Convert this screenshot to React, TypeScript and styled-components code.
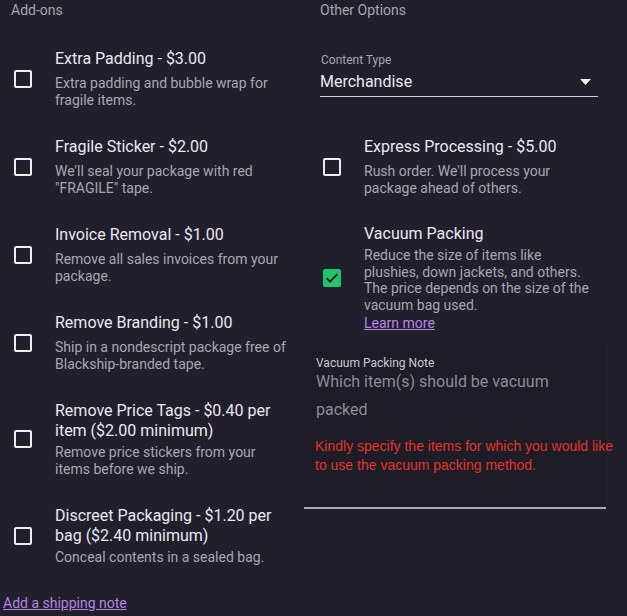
import React from "react";
import styled, { createGlobalStyle } from "styled-components";

const GlobalStyle = createGlobalStyle`
  html, body { margin: 0; padding: 0; background: #201f2b; }
  body { font-family: Roboto, "Noto Sans", Arial, sans-serif; }
  * { box-sizing: border-box; }
`;

const Page = styled.div`
  width: 627px;
  height: 616px;
  overflow: hidden;
  padding-left: 3px;
  background: #201f2b;
`;

const Columns = styled.div`
  display: grid;
  grid-template-columns: 301px 323px;
  align-items: start;
`;

const LeftColumn = styled.section`
  display: flex;
  flex-direction: column;
  padding-left: 8px;
`;

const RightColumn = styled.section`
  display: flex;
  flex-direction: column;
`;

const Inset = styled.div`
  display: flex;
  flex-direction: column;
  padding-left: 16px;
`;

const SectionHeader = styled.h2`
  margin: 0;
  font-size: 14px;
  line-height: 20px;
  font-weight: 400;
  color: #a8a5ae;
`;

const OptionList = styled.div<{ $top: number; $gap: number }>`
  display: flex;
  flex-direction: column;
  gap: ${(p) => p.$gap}px;
  margin-top: ${(p) => p.$top}px;
`;

const OptionRow = styled.label`
  display: flex;
  align-items: center;
  cursor: pointer;
`;

const BoxIcon = styled.svg`
  width: 24px;
  height: 24px;
  flex: none;
  margin-right: 20px;
`;

const OptionText = styled.div<{ $width: number }>`
  display: flex;
  flex-direction: column;
  justify-content: space-between;
  min-height: 59px;
  width: ${(p) => p.$width}px;
`;

const OptionTitle = styled.div`
  font-size: 16px;
  line-height: 20px;
  color: #ece7f1;
`;

const OptionBody = styled.div`
  margin-top: 3px;
`;

const OptionDesc = styled.div`
  font-size: 14px;
  line-height: 16.5px;
  color: #aaa6b0;
`;

const TextLink = styled.a<{ $block?: boolean }>`
  display: ${(p) => (p.$block ? "block" : "inline-block")};
  color: #b983e6;
  text-decoration: underline;
  font-size: 14px;
  line-height: ${(p) => (p.$block ? 17 : 20)}px;
  margin-top: ${(p) => (p.$block ? 2 : 0)}px;
  cursor: pointer;
`;

const SelectField = styled.div`
  width: 278px;
  margin-top: 33px;
  padding-bottom: 4px;
  border-bottom: 1px solid #cfcfd4;
`;

const SelectLabel = styled.div`
  font-size: 12px;
  line-height: 14px;
  color: #aaa6ae;
  padding-left: 1px;
`;

const SelectValueRow = styled.div`
  display: flex;
  align-items: center;
  justify-content: space-between;
  margin-top: 5px;
  padding-right: 7px;
`;

const SelectValue = styled.span`
  font-size: 16px;
  line-height: 20px;
  color: #ece8ee;
`;

const NoteBox = styled.div`
  width: 302px;
  margin-top: 12px;
  padding: 13px 12px 32px;
  background: #1d1c27;
  border-bottom: 2px solid #a9a9ae;
`;

const NoteLabel = styled.label`
  display: block;
  font-size: 12px;
  line-height: 12px;
  color: #cdc9d0;
`;

const NoteInput = styled.textarea`
  display: block;
  width: 100%;
  height: 56px;
  margin: -1px 0 0;
  padding: 0;
  border: none;
  outline: none;
  resize: none;
  overflow: hidden;
  background: transparent;
  font-family: Roboto, "Noto Sans", Arial, sans-serif;
  font-size: 16px;
  line-height: 28px;
  color: #ece8ee;
  &::placeholder {
    color: #8f8c95;
    opacity: 1;
  }
`;

const NoteHelper = styled.div`
  margin: 13px 0 0 -1px;
  font-family: "Liberation Sans", Arial, sans-serif;
  font-size: 14px;
  line-height: 19px;
  color: #e3342b;
  white-space: nowrap;
`;

const Footer = styled.div`
  margin-top: 27px;
`;

const Unchecked = () => (
  <BoxIcon viewBox="0 0 24 24" aria-hidden="true">
    <path
      fill="#eeeeee"
      d="M19 5v14H5V5h14m0-2H5c-1.1 0-2 .9-2 2v14c0 1.1.9 2 2 2h14c1.1 0 2-.9 2-2V5c0-1.1-.9-2-2-2z"
    />
  </BoxIcon>
);

const Checked = () => (
  <BoxIcon viewBox="0 0 24 24" aria-hidden="true">
    <rect x="3" y="3" width="18" height="18" rx="2" fill="#22c46b" />
    <path
      d="M6.6 12.2l3.4 3.4 7.4-7.4"
      fill="none"
      stroke="#1b1b22"
      strokeWidth="1.9"
    />
  </BoxIcon>
);

const ArrowDown = () => (
  <svg width="11" height="6" viewBox="0 0 11 6" aria-hidden="true">
    <polygon points="0,0 11,0 5.5,6" fill="#eeeeee" />
  </svg>
);

type Option = { title: string; desc: string; checked?: boolean };

const addOns: Option[] = [
  { title: "Extra Padding - $3.00", desc: "Extra padding and bubble wrap for fragile items." },
  { title: "Fragile Sticker - $2.00", desc: 'We\'ll seal your package with red "FRAGILE" tape.' },
  { title: "Invoice Removal - $1.00", desc: "Remove all sales invoices from your package." },
  { title: "Remove Branding - $1.00", desc: "Ship in a nondescript package free of Blackship-branded tape." },
  { title: "Remove Price Tags - $0.40 per item ($2.00 minimum)", desc: "Remove price stickers from your items before we ship." },
  { title: "Discreet Packaging - $1.20 per bag ($2.40 minimum)", desc: "Conceal contents in a sealed bag." },
];

const OptionItem: React.FC<{ option: Option; width: number; children?: React.ReactNode }> = ({
  option,
  width,
  children,
}) => (
  <OptionRow>
    {option.checked ? <Checked /> : <Unchecked />}
    <OptionText $width={width}>
      <OptionTitle>{option.title}</OptionTitle>
      <OptionBody>
        <OptionDesc>{option.desc}</OptionDesc>
        {children}
      </OptionBody>
    </OptionText>
  </OptionRow>
);

export default function App() {
  return (
    <>
      <GlobalStyle />
      <Page>
        <Columns>
          <LeftColumn>
            <SectionHeader>Add-ons</SectionHeader>
            <OptionList $top={29} $gap={29}>
              {addOns.map((o) => (
                <OptionItem key={o.title} option={o} width={236} />
              ))}
            </OptionList>
          </LeftColumn>
          <RightColumn>
            <Inset>
              <SectionHeader>Other Options</SectionHeader>
              <SelectField>
                <SelectLabel>Content Type</SelectLabel>
                <SelectValueRow>
                  <SelectValue>Merchandise</SelectValue>
                  <ArrowDown />
                </SelectValueRow>
              </SelectField>
              <OptionList $top={40} $gap={28}>
                <OptionItem
                  option={{
                    title: "Express Processing - $5.00",
                    desc: "Rush order. We'll process your package ahead of others.",
                  }}
                  width={234}
                />
                <OptionItem
                  option={{
                    title: "Vacuum Packing",
                    desc: "Reduce the size of items like plushies, down jackets, and others. The price depends on the size of the vacuum bag used.",
                    checked: true,
                  }}
                  width={234}
                >
                  <TextLink $block>Learn more</TextLink>
                </OptionItem>
              </OptionList>
            </Inset>
            <NoteBox>
              <NoteLabel htmlFor="vacuum-note">Vacuum Packing Note</NoteLabel>
              <NoteInput id="vacuum-note" rows={2} placeholder="Which item(s) should be vacuum packed" />
              <NoteHelper>
                Kindly specify the items for which you would like
                <br />
                to use the vacuum packing method.
              </NoteHelper>
            </NoteBox>
          </RightColumn>
        </Columns>
        <Footer>
          <TextLink>Add a shipping note</TextLink>
        </Footer>
      </Page>
    </>
  );
}
